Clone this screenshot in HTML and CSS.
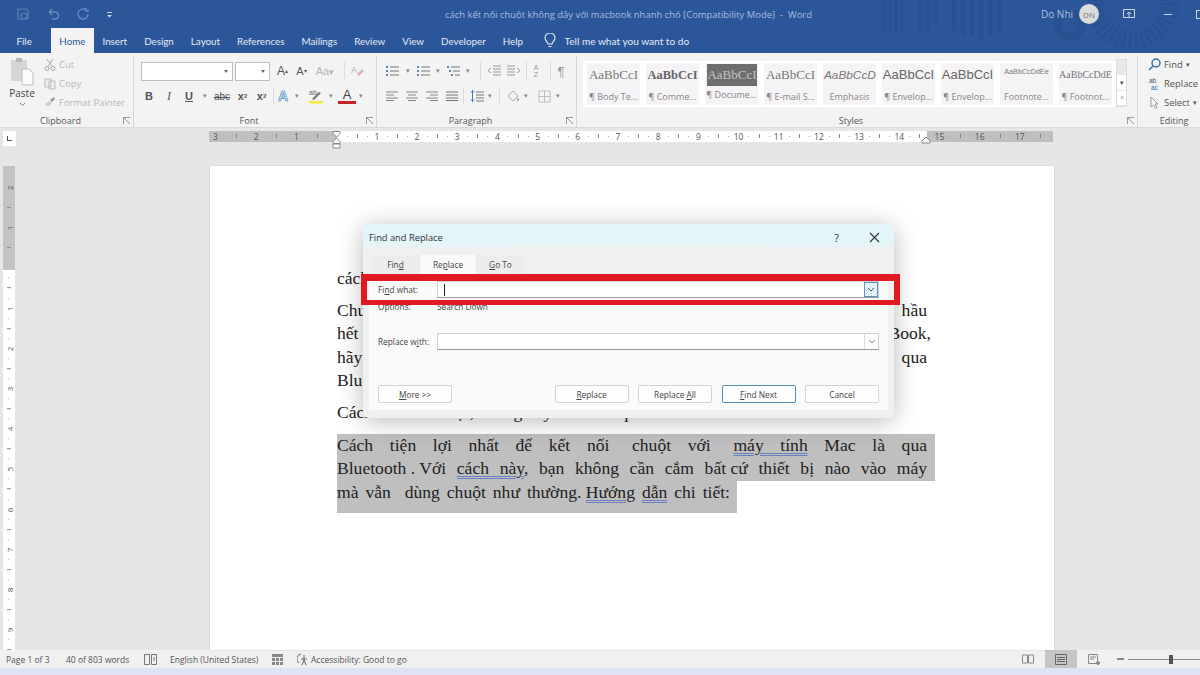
FILE: index.html
```html
<!DOCTYPE html>
<html lang="en">
<head>
<meta charset="UTF-8">
<title>cách kết nối chuột không dây với macbook nhanh chó - Word</title>
<link rel="stylesheet" href="styles.css">
</head>
<body>
<div class="app">

<header class="head">
    <svg class="head-art" width="330" height="53" viewBox="0 0 330 53" fill="none" stroke="#275290">
        <path d="M14 0v30M20 0v30M26 0v32M32 0v30" stroke-width="3"/>
        <path d="M50 0v34M58 0v34M66 0v24" stroke-width="3"/>
        <path d="M84 0v30M93 0v36M102 0v36M111 0v38M120 0v36M129 0v32" stroke-width="4"/>
        <circle cx="200" cy="25" r="12" stroke-width="7"/>
        <circle cx="262" cy="2" r="38" stroke-width="18" stroke-dasharray="3 3"/>
    </svg>
    <div class="titlebar">
        <div class="qat">
            <svg width="14" height="14" viewBox="0 0 14 14" fill="none" stroke="#5f80b4" stroke-width="1.2"><path d="M2 2h8l2 2v8H2z"/><circle cx="8" cy="9" r="3"/></svg>
            <svg width="14" height="14" viewBox="0 0 14 14" fill="none" stroke="#6d8bbb" stroke-width="1.4"><path d="M3 5h6a3 3 0 0 1 0 7H6M3 5l3-3M3 5l3 3"/></svg>
            <svg width="14" height="14" viewBox="0 0 14 14" fill="none" stroke="#6d8bbb" stroke-width="1.4"><path d="M10 3a5 5 0 1 0 2 4M10 1v3h3"/></svg>
            <svg width="8" height="14" viewBox="0 0 8 14" fill="#c9d6ea"><path d="M1 5h5v1H1zM1 8h5l-2.500 2.500z"/></svg>
        </div>
        <div class="doc-title">cách kết nối chuột không dây với macbook nhanh chó [Compatibility Mode]&nbsp; -&nbsp; Word</div>
        <div class="user">Do Nhi</div>
        <div class="avatar">DN</div>
        <svg class="win-icon" width="12" height="10" viewBox="0 0 12 10" fill="none" stroke="#c9d6ea"><path d="M.5.5h11v8H.5zM6 8V3M4 5l2-2 2 2"/></svg>
        <div class="win-min"></div>
        <div class="win-max"></div>
    </div>
    <nav class="tabs">
        <span class="tab tab-file">File</span>
        <span class="tab tab-on">Home</span>
        <span class="tab">Insert</span>
        <span class="tab">Design</span>
        <span class="tab">Layout</span>
        <span class="tab">References</span>
        <span class="tab">Mailings</span>
        <span class="tab">Review</span>
        <span class="tab">View</span>
        <span class="tab">Developer</span>
        <span class="tab">Help</span>
        <svg class="bulb" width="12" height="16" viewBox="0 0 12 16" fill="none" stroke="#e8eef7" stroke-width="1.100"><path d="M4 11c0-2-3-3-3-6a5 5 0 0 1 10 0c0 3-3 4-3 6zM4.500 13.500h3"/></svg>
        <span class="tell">Tell me what you want to do</span>
    </nav>
</header>

<section class="ribbon">
    <div class="grp grp-clip">
        <div class="grp-body clip-body">
            <div class="paste">
                <svg width="24" height="30" viewBox="0 0 24 30"><path d="M1 4h16v21H1z" fill="#d9d5d5"/><path d="M6 2h6v4H6z" fill="#bdb8b8"/><path d="M12 13h7l4 4v12H12z" fill="#fbfbfb" stroke="#bdbdbd"/></svg>
                <span>Paste</span>
                <svg width="7" height="5" viewBox="0 0 7 5" fill="none" stroke="#777"><path d="M1 1l2.500 2.500L6 1"/></svg>
            </div>
            <div class="clip-list">
                <div class="clip-item"><svg width="12" height="13" viewBox="0 0 12 13" fill="none" stroke="#aaa"><circle cx="3" cy="10.500" r="2"/><circle cx="9" cy="10.500" r="2"/><path d="M3.500 9L9 1M8.500 9L3 1"/></svg>Cut</div>
                <div class="clip-item"><svg width="12" height="13" viewBox="0 0 12 13" fill="none" stroke="#bbb"><path d="M1 2h6v8H1zM5 4h6v8H5z" fill="#eee"/></svg>Copy</div>
                <div class="clip-item"><svg width="12" height="13" viewBox="0 0 12 13"><path d="M6 4l4-3 1 2-3 3z" fill="#999"/><path d="M1 8l5-3 2 2-4 4z" fill="#ccc"/></svg>Format Painter</div>
            </div>
        </div>
        <div class="grp-label">Clipboard<i class="launch"></i></div>
    </div>

    <div class="grp grp-font">
        <div class="grp-body col">
            <div class="row row-top font-top">
                <div class="combo combo-name"><b class="caret"></b></div>
                <div class="combo combo-size"><b class="caret"></b></div>
                <span class="fb w19 big">A<sup>▴</sup></span>
                <span class="fb w19 big sm">A<sup>▾</sup></span>
                <span class="fb w28 fade">Aa <small>▾</small></span>
                <i class="vsep"></i>
                <svg class="ml6" width="14" height="14" viewBox="0 0 14 14"><text x="0" y="9" font-size="9" font-family="Liberation Sans" fill="#aaa">A</text><path d="M6 10l5-5 2 2-5 5z" fill="#d8b6b6"/></svg>
            </div>
            <div class="row row-bot font-bot">
                <span class="fb w20 bold">B</span>
                <span class="fb w20 ital">I</span>
                <span class="fb w20 bold und">U</span>
                <span class="fb w12 arrow">▾</span>
                <span class="fb w22 strike">abc</span>
                <span class="fb w19 bold">x<sub>2</sub></span>
                <span class="fb w19 bold">x<sup>2</sup></span>
                <i class="vsep"></i>
                <span class="fb w18 outline">A</span>
                <span class="fb w10 arrow">▾</span>
                <svg class="ml6" width="16" height="16" viewBox="0 0 16 16"><text x="1" y="7" font-size="7" font-family="Liberation Sans" fill="#666">ab</text><path d="M4 11l7-7 2 1-7 7z" fill="#777"/><path d="M1 13h14v2.500H1z" fill="#f4ee3a"/></svg>
                <span class="fb w14 arrow">▾</span>
                <span class="fb w18 color-a">A</span>
                <span class="fb w10 arrow">▾</span>
            </div>
        </div>
        <div class="grp-label">Font<i class="launch"></i></div>
    </div>

    <div class="grp grp-para">
        <div class="grp-body col">
            <div class="row row-top para-top">
                <svg width="14" height="12" viewBox="0 0 14 12" stroke="#777"><path d="M5 2h9M5 6h9M5 10h9"/><path d="M1 2h2M1 6h2M1 10h2" stroke="#5a86bb" stroke-width="2"/></svg>
                <span class="fb w17 arrow">▾</span>
                <svg width="14" height="12" viewBox="0 0 14 12" stroke="#777"><path d="M5 2h9M5 6h9M5 10h9"/><path d="M1 2h2M1 6h2M1 10h2" stroke="#5a86bb" stroke-width="2"/></svg>
                <span class="fb w16 arrow">▾</span>
                <svg width="14" height="12" viewBox="0 0 14 12" stroke="#777"><path d="M5 2h9M7 6h7M9 10h5"/><path d="M1 2h2M3 6h2M5 10h2" stroke="#5a86bb" stroke-width="2"/></svg>
                <span class="fb w15 arrow">▾</span>
                <i class="vsep"></i>
                <svg class="ml6" width="14" height="12" viewBox="0 0 14 12" stroke="#999"><path d="M6 1h8M6 4h8M6 7h8M6 10h8M4 3L1 5.500 4 8" fill="none"/></svg>
                <svg class="ml6" width="14" height="12" viewBox="0 0 14 12" stroke="#999"><path d="M0 1h8M0 4h8M0 7h8M0 10h8M10 3l3 2.500L10 8" fill="none"/></svg>
                <i class="vsep"></i>
                <span class="fb w18 sort">A<br>Z</span>
                <i class="vsep"></i>
                <span class="fb w20 pilcrow">¶</span>
            </div>
            <div class="row row-bot para-bot">
                <svg width="12" height="10" viewBox="0 0 12 10" stroke="#888"><path d="M0 1h12M0 4h8M0 7h12M0 9.500h8"/></svg>
                <svg class="ml8" width="12" height="10" viewBox="0 0 12 10" stroke="#888"><path d="M0 1h12M2 4h8M0 7h12M2 9.500h8"/></svg>
                <svg class="ml8" width="12" height="10" viewBox="0 0 12 10" stroke="#888"><path d="M0 1h12M4 4h8M0 7h12M4 9.500h8"/></svg>
                <svg class="ml8" width="12" height="10" viewBox="0 0 12 10" stroke="#777"><path d="M0 1h12M0 4h12M0 7h12M0 9.500h12"/></svg>
                <i class="vsep"></i>
                <svg class="ml6" width="14" height="14" viewBox="0 0 14 14" stroke="#777" fill="none"><path d="M6 3h8M6 6h8M6 9h8M6 12h8"/><path d="M2.500 2v10M1 3.500l1.500-2 1.500 2M1 10.500l1.500 2 1.500-2" stroke="#3f7fbf"/></svg>
                <span class="fb w12 arrow">▾</span>
                <i class="vsep vsep-tight"></i>
                <svg class="ml6" width="14" height="14" viewBox="0 0 14 14" stroke="#aaa" fill="none"><path d="M2 7l5-5 5 5-5 5z"/><path d="M12 9c1 1.500 1 3 0 3s-1-1.500 0-3z" fill="#ccc"/></svg>
                <span class="fb w12 arrow fade">▾</span>
                <svg class="ml6" width="13" height="13" viewBox="0 0 14 14" stroke="#bbb" fill="none"><path d="M1 1h12v12H1zM7 1v12M1 7h12"/></svg>
                <span class="fb w14 arrow fade">▾</span>
            </div>
        </div>
        <div class="grp-label">Paragraph<i class="launch"></i></div>
    </div>

    <div class="grp grp-styles">
        <div class="grp-body gallery-wrap">
            <div class="gallery">
                <div class="style"><span class="pv">AaBbCcI</span><span class="nm">¶ Body Te...</span></div>
                <div class="style"><span class="pv pv-b">AaBbCcI</span><span class="nm">¶ Comme...</span></div>
                <div class="style"><span class="pv pv-sel">AaBbCcI</span><span class="nm">¶ Docume...</span></div>
                <div class="style"><span class="pv">AaBbCcI</span><span class="nm">¶ E-mail S...</span></div>
                <div class="style"><span class="pv pv-em">AaBbCcD</span><span class="nm">Emphasis</span></div>
                <div class="style"><span class="pv pv-sans">AaBbCcI</span><span class="nm">¶ Envelop...</span></div>
                <div class="style"><span class="pv pv-sans">AaBbCcI</span><span class="nm">¶ Envelop...</span></div>
                <div class="style"><span class="pv pv-tiny">AaBbCcDdEe</span><span class="nm">Footnote...</span></div>
                <div class="style"><span class="pv pv-small">AaBbCcDdE</span><span class="nm">¶ Footnot...</span></div>
            </div>
            <div class="scroller">
                <span class="sc sc-off"></span>
                <span class="sc">▾</span>
                <span class="sc">⩡</span>
            </div>
        </div>
        <div class="grp-label">Styles<i class="launch"></i></div>
    </div>

    <div class="grp grp-edit">
        <div class="grp-body edit-list">
            <div class="edit-item"><svg width="13" height="13" viewBox="0 0 13 13" fill="none" stroke="#2f6ea8" stroke-width="1.400"><circle cx="8" cy="5" r="4"/><path d="M5 8l-4 4"/></svg>Find <small>▾</small></div>
            <div class="edit-item"><svg width="13" height="13" viewBox="0 0 13 13"><text x="1" y="6" font-size="6.500" font-family="Liberation Sans" fill="#555">ab</text><text x="3" y="12.500" font-size="6.500" font-family="Liberation Sans" fill="#2f6ea8">ac</text></svg>Replace</div>
            <div class="edit-item"><svg width="13" height="13" viewBox="0 0 13 13" fill="#fff" stroke="#999"><path d="M3 1v10l2.500-2 2 3.500 1.500-1-2-3.500h3z"/></svg>Select <small>▾</small></div>
        </div>
        <div class="grp-label">Editing</div>
    </div>
</section>

<div class="ruler-bar">
    <div class="corner"><i></i></div>
    <div class="ruler">
        <div class="ruler-cells">
            <span class="cell-first">3</span><span>2</span><span>1</span><span></span><span>1</span><span>2</span><span>3</span><span>4</span><span>5</span><span>6</span><span>7</span><span>8</span><span>9</span><span>10</span><span>11</span><span>12</span><span>13</span><span>14</span><span>15</span><span>16</span><span>17</span><span class="cell-last"></span>
        </div>
        <svg class="marker marker-l" width="10" height="20" viewBox="0 0 10 20" fill="#fff" stroke="#888"><path d="M1 .5h7v2L4.500 6 1 2.500zM4.500 7L8 10.500v2H1v-2zM1 13h7v4H1z"/></svg>
        <svg class="marker marker-r" width="10" height="8" viewBox="0 0 10 8" fill="#fff" stroke="#888"><path d="M5 1l4 4v2H1V5z"/></svg>
    </div>
</div>

<main class="work">
    <div class="vruler">
        <span>2</span><span>1</span><span></span><span>1</span><span>2</span><span>3</span><span>4</span><span>5</span><span>6</span><span>7</span><span>8</span><span>9</span>
    </div>
    <div class="page">
        <p class="para first"><span class="line left">cách kết nối chuột không dây với macbook</span></p>
        <p class="para">
            <span class="line">Chuột không dây là thiết bị được nhiều người dùng yêu thích và hầu</span>
            <span class="line wide">hết các dòng chuột hiện nay đều có thể kết nối với máy MacBook,</span>
            <span class="line">hãy cùng tìm hiểu cách kết nối chuột không dây với máy tính qua</span>
            <span class="line left">Bluetooth hoặc USB</span>
        </p>
        <p class="para"><span class="line left">Cách kết nối chuột, không dây với Mac qua</span></p>
        <div class="sel">
            <span class="line sel-line">Cách tiện lợi nhất để kết nối <i class="gap"></i>chuột với <i class="gap"></i><u>máy tính</u> Mac là qua</span>
            <span class="line sel-line"><span class="tight">Bluetooth . Với</span> <u>cách này</u>, bạn không cần cắm <span class="tight">bất cứ</span> thiết bị nào vào máy</span>
            <span class="line sel-line sel-last">mà vẫn &nbsp;dùng chuột như <span class="tight">thường. <u>Hướng</u></span> <u>dẫn</u> chi tiết:</span>
        </div>
    </div>

    <div class="dialog">
        <div class="dlg-title">
            <span>Find and Replace</span>
            <span class="dlg-help">?</span>
            <svg width="11" height="11" viewBox="0 0 11 11" stroke="#333" stroke-width="1.100"><path d="M1 1l9 9M10 1l-9 9"/></svg>
        </div>
        <div class="dlg-tabs">
            <span class="dlg-tab">Fin<u>d</u></span>
            <span class="dlg-tab dlg-tab-on">Re<u>p</u>lace</span>
            <span class="dlg-tab"><u>G</u>o To</span>
        </div>
        <div class="dlg-panel">
            <div class="dlg-row dlg-find">
                <label>Fi<u>n</u>d what:</label>
                <div class="dlg-input"><i class="cursor"></i><span class="dd dd-on"><svg width="8" height="5" viewBox="0 0 8 5" fill="none" stroke="#456"><path d="M1 1l3 3 3-3"/></svg></span></div>
            </div>
            <div class="dlg-row dlg-opts"><label>Options:</label><span>Search Down</span></div>
            <div class="dlg-row dlg-with">
                <label>Replace w<u>i</u>th:</label>
                <div class="dlg-input"><span class="dd"><svg width="8" height="5" viewBox="0 0 8 5" fill="none" stroke="#888"><path d="M1 1l3 3 3-3"/></svg></span></div>
            </div>
            <div class="dlg-btns">
                <span class="btn btn-more"><span><u>M</u>ore &gt;&gt;</span></span>
                <span class="btn"><span><u>R</u>eplace</span></span>
                <span class="btn"><span>Replace <u>A</u>ll</span></span>
                <span class="btn btn-main"><span><u>F</u>ind Next</span></span>
                <span class="btn"><span>Cancel</span></span>
            </div>
        </div>
    </div>
    <div class="redbox"></div>
</main>

<footer class="status">
    <span class="st st-page">Page 1 of 3</span>
    <span class="st st-words">40 of 803 words</span>
    <svg class="st-ic" width="13" height="11" viewBox="0 0 13 11" fill="none" stroke="#777"><path d="M.5.5h5v10h-5zM7.500.5h5v10h-5zM9 4h2M9 6h2"/></svg>
    <span class="st st-lang">English (United States)</span>
    <svg class="st-ic2" width="11" height="11" viewBox="0 0 11 11" fill="#888"><path d="M0 0h11v3H0zM0 4h3v3H0zM4 4h3v3H4zM8 4h3v3H8zM0 8h3v3H0zM4 8h3v3H4zM8 8h3v3H8z"/></svg>
    <svg class="st-ic3" width="14" height="13" viewBox="0 0 14 13" fill="none" stroke="#666"><path d="M4 1a5 5 0 0 0-2 9M7 2v5M4 6h6M5 12l2-5 2 5"/></svg>
    <span class="st">Accessibility: Good to go</span>
    <div class="st-right">
        <svg width="12" height="10" viewBox="0 0 12 10" fill="none" stroke="#888"><path d="M.5 1h5v8h-5zM6.500 1h5v8h-5z"/></svg>
        <div class="view-on"><svg width="12" height="11" viewBox="0 0 12 11" fill="none" stroke="#666"><path d="M.5.5h11v10H.5zM2 3.500h8M2 5.500h8M2 7.500h8"/></svg></div>
        <svg width="12" height="11" viewBox="0 0 12 11" fill="none" stroke="#888"><path d="M.5.5h9v9h-9zM2 3h6M2 5h4"/><circle cx="10" cy="9" r="1.500" fill="#888"/></svg>
        <i class="zoom-minus"></i>
        <div class="zoom-track"><i class="zoom-thumb"></i></div>
    </div>
</footer>
<div class="bottom-strip"></div>

</div>
</body>
</html>
```

FILE: styles.css
```css
* {
    box-sizing: border-box;
}

html, body {
    margin: 0;
    padding: 0;
}

body {
    width: 1200px;
    height: 675px;
    overflow: hidden;
    font-family: "Open Sans", "Liberation Sans", sans-serif;
    color: #444;
}

.app {
    position: relative;
    display: flex;
    flex-direction: column;
    width: 1200px;
    height: 675px;
    overflow: hidden;
    background-color: #e6e6e6;
}

/* title bar and tabs */
.head {
    position: relative;
    flex: none;
    height: 53px;
    background-color: #2b579a;
    overflow: hidden;
}

.head-art {
    position: absolute;
    left: 870px;
    top: 0;
}

.titlebar {
    position: relative;
    display: flex;
    align-items: center;
    height: 28px;
    font-size: 10.5px;
}

.titlebar > * {
    flex: none;
}

.qat {
    display: flex;
    align-items: center;
    gap: 16px;
    width: 445px;
    padding-left: 16px;
}

.doc-title {
    width: 596px;
    color: #a8bcdc;
    font-size: 9.45px;
}

.user {
    width: 38px;
    color: #aebfdb;
    font-size: 10px;
}

.avatar {
    display: flex;
    justify-content: center;
    align-items: center;
    width: 20px;
    height: 20px;
    border-radius: 50%;
    background-color: #dcdcdc;
    color: #777;
    font-size: 8px;
}

.win-icon {
    margin-left: 24px;
}

.win-min {
    width: 8px;
    height: 1px;
    margin-left: 29px;
    background-color: #c9d6ea;
}

.win-max {
    width: 9px;
    height: 9px;
    margin-left: 24px;
    border: 1px solid #c9d6ea;
}

.tabs {
    position: relative;
    display: flex;
    align-items: stretch;
    height: 25px;
    padding-left: 8px;
    font-family: Lato, "Liberation Sans", sans-serif;
    font-size: 9.8px;
    color: #e3eaf5;
}

.tab {
    display: flex;
    align-items: center;
    padding: 0 8.5px;
}

.tab-file {
    padding-right: 19px;
}

.tab-on {
    background-color: #f3f3f3;
    color: #2b579a;
}

.bulb {
    align-self: center;
    margin-left: 12px;
}

.tell {
    align-self: center;
    margin-left: 9px;
    font-size: 10.1px;
}

/* ribbon */
.ribbon {
    display: flex;
    flex: none;
    height: 75px;
    background-color: #f3f3f3;
    border-bottom: 1px solid #dadada;
}

.grp {
    display: flex;
    flex-direction: column;
    border-right: 1px solid #d6d6d6;
    margin-top: 3px;
}

.grp-body {
    flex: 1;
}

.grp-label {
    position: relative;
    height: 13px;
    padding-right: 12px;
    text-align: center;
    font-size: 9px;
    line-height: 13px;
    color: #555;
}

.launch {
    position: absolute;
    right: 3px;
    top: 3px;
    width: 7px;
    height: 7px;
    border-left: 1px solid #999;
    border-top: 1px solid #999;
    background: linear-gradient(45deg, transparent 45%, #999 45%, #999 55%, transparent 55%);
}

.grp-clip {
    width: 134px;
}

.grp-font {
    width: 243px;
}

.grp-para {
    width: 200px;
}

.grp-styles {
    width: 561px;
}

.grp-edit {
    width: 62px;
    border-right: 0;
}

.grp-edit .grp-label {
    padding: 0 0 0 10px;
}

.clip-body {
    display: flex;
}

.paste {
    display: flex;
    flex-direction: column;
    align-items: center;
    width: 44px;
    padding-top: 0;
    font-size: 10px;
    line-height: 12px;
    color: #444;
}

.paste span {
    margin: 1px 0 3px;
}

.clip-list {
    display: flex;
    flex-direction: column;
    gap: 4px;
    padding-top: 1px;
    font-size: 9.5px;
    color: #b8b8b8;
}

.clip-item {
    display: flex;
    align-items: center;
    gap: 3px;
    height: 15px;
}

.col {
    display: flex;
    flex-direction: column;
}

.row {
    display: flex;
    align-items: center;
}

.row-top {
    height: 22px;
    margin-top: 4px;
}

.row-bot {
    height: 20px;
    margin-top: 4px;
}

.font-top {
    padding-left: 7px;
}

.font-bot {
    padding-left: 5px;
}

.para-top {
    padding-left: 8px;
}

.para-bot {
    padding-left: 9px;
}

.combo {
    position: relative;
    height: 19px;
    margin-right: 2px;
    background-color: #fff;
    border: 1px solid #bdbdbd;
}

.combo-name {
    width: 92px;
}

.combo-size {
    width: 35px;
    margin-right: 3px;
}

.caret {
    position: absolute;
    right: 4px;
    top: 7px;
    border-left: 2.5px solid transparent;
    border-right: 2.5px solid transparent;
    border-top: 3px solid #666;
}

.fb {
    display: flex;
    justify-content: center;
    align-items: center;
    font-family: "Liberation Sans", sans-serif;
    font-size: 11px;
    color: #555;
}

.fb sup, .fb sub {
    font-size: 6px;
    line-height: 0;
}

.w10 { width: 10px; }
.w12 { width: 12px; }
.w14 { width: 14px; }
.w15 { width: 15px; }
.w16 { width: 16px; }
.w17 { width: 17px; }
.w18 { width: 18px; }
.w19 { width: 19px; }
.w20 { width: 20px; }
.w22 { width: 22px; }
.w28 { width: 28px; }

.ml6 { margin-left: 6px; }
.ml8 { margin-left: 8px; }

.big {
    font-size: 12px;
}

.sm {
    font-size: 11px;
}

.fade {
    color: #b5b5b5;
}

.bold {
    font-weight: bold;
}

.ital {
    font-style: italic;
    font-family: "Liberation Serif", serif;
    font-size: 12px;
}

.und {
    text-decoration: underline;
}

.arrow {
    font-size: 7px;
    color: #888;
}

.strike {
    font-size: 10px;
    text-decoration: line-through;
}

.outline {
    font-size: 14px;
    font-weight: bold;
    color: #d6e6f6;
    -webkit-text-stroke: 0.7px #4e8cc8;
}

.color-a {
    font-size: 13px;
    line-height: 13px;
    color: #444;
    border-bottom: 3px solid #c8222a;
}

.sort {
    font-size: 7px;
    line-height: 7px;
    color: #999;
    text-align: center;
}

.pilcrow {
    font-size: 13px;
    color: #999;
}

.vsep {
    width: 1px;
    height: 18px;
    margin-left: 5px;
    background-color: #dcdcdc;
}

.font-bot .vsep {
    margin-left: 2px;
}

.vsep-tight {
    margin-left: 3px;
}

/* style gallery */
.gallery-wrap {
    display: flex;
    padding: 5px 0 0 6px;
}

.gallery {
    display: flex;
    gap: 6px;
    width: 533px;
    height: 46px;
    padding: 2px 0 2px 4px;
    background-color: #fff;
}

.style {
    display: flex;
    flex-direction: column;
    width: 53px;
    background-color: #f6f3f6;
    overflow: hidden;
    white-space: nowrap;
}

.pv {
    height: 24px;
    margin-bottom: 2px;
    font-family: "Liberation Serif", serif;
    font-size: 13px;
    line-height: 24px;
    color: #777;
    text-align: center;
}

.pv-b {
    font-weight: bold;
    color: #666;
    font-size: 12.5px;
}

.pv-sel {
    margin: 1px 1px 1px 2px;
    height: 22px;
    line-height: 22px;
    background-color: #6e6e6e;
    color: #c4c4c4;
}

.pv-em {
    font-style: italic;
    font-family: "Liberation Sans", sans-serif;
    font-size: 11.8px;
    text-align: left;
    padding-left: 1px;
}

.pv-sans {
    font-family: "Liberation Sans", sans-serif;
    font-size: 13px;
    color: #666;
}

.pv-tiny {
    font-family: "Liberation Sans", sans-serif;
    font-size: 7.2px;
    line-height: 18px;
}

.pv-small {
    font-size: 10px;
}

.nm {
    font-size: 9px;
    line-height: 16px;
    color: #888;
    text-align: center;
}

.scroller {
    display: flex;
    flex-direction: column;
    width: 11px;
    height: 48px;
    margin-top: -2px;
    background-color: #fff;
    border: 1px solid #dcdcdc;
}

.sc {
    display: flex;
    flex: 1;
    justify-content: center;
    align-items: center;
    font-size: 7px;
    color: #555;
    border-bottom: 1px solid #e6e6e6;
}

.sc-off {
    background-color: #e8e8e8;
}

/* editing */
.edit-list {
    display: flex;
    flex-direction: column;
    gap: 3px;
    padding: 0 0 0 10px;
    font-size: 9.4px;
    color: #555;
}

.edit-item {
    display: flex;
    align-items: center;
    gap: 3px;
    height: 16px;
    white-space: nowrap;
}

.edit-item small {
    font-size: 7px;
}

/* rulers */
.ruler-bar {
    display: flex;
    flex: none;
    height: 38px;
    padding: 3px 0 0 3px;
}

.corner {
    display: flex;
    justify-content: center;
    align-items: center;
    width: 13px;
    height: 15px;
    background-color: #fff;
}

.corner i {
    width: 5px;
    height: 5px;
    border-left: 1px solid #555;
    border-bottom: 1px solid #555;
}

.ruler {
    position: relative;
    width: 844px;
    height: 11px;
    margin-left: 193px;
    background: linear-gradient(90deg, #bfbfbf 128px, #fff 128px, #fff 718px, #bfbfbf 718px);
}

.ruler-cells {
    display: flex;
}

.ruler-cells span {
    flex: 0 0 40.2px;
    height: 11px;
    font-size: 8.5px;
    line-height: 11px;
    text-align: center;
    color: #555;
    background-image:
        linear-gradient(#888, #888),
        linear-gradient(#aaa, #aaa),
        linear-gradient(#aaa, #aaa);
    background-repeat: no-repeat;
    background-size: 1px 4px, 1px 1px, 1px 1px;
    background-position: 0 3px, 10px 5px, 30px 5px;
}

.ruler-cells .cell-first {
    flex-basis: 27.2px;
    padding-left: 4px;
    text-align: left;
    background-position: 0 -8px, 17px 5px, -8px 5px;
}

.ruler-cells .cell-last {
    flex-basis: 13.2px;
}

.marker {
    position: absolute;
}

.marker-l {
    left: 123px;
    top: 0;
}

.marker-r {
    left: 712px;
    top: 5px;
}

/* workspace */
.work {
    position: relative;
    flex: 1;
    display: flex;
    min-height: 0;
    padding: 0 0 0 3px;
}

.vruler {
    display: flex;
    flex-direction: column;
    width: 12px;
    height: 484px;
    padding-top: 2px;
    background: linear-gradient(#c3c3c3 104px, #fff 104px);
    overflow: hidden;
}

.vruler span {
    display: flex;
    flex: 0 0 40.2px;
    justify-content: center;
    align-items: center;
    writing-mode: vertical-rl;
    transform: rotate(180deg);
    font-size: 8px;
    color: #555;
    background-image:
        linear-gradient(#888, #888),
        linear-gradient(#aaa, #aaa),
        linear-gradient(#aaa, #aaa);
    background-repeat: no-repeat;
    background-size: 4px 1px, 1px 1px, 1px 1px;
    background-position: 4px 0, 6px 10px, 6px 30px;
}

.page {
    flex: none;
    width: 844px;
    height: 484px;
    margin-left: 195px;
    padding: 101px 127px 0 127px;
    background-color: #fff;
    box-shadow: 0 0 1px #aaa;
    font-family: "Liberation Serif", serif;
    font-size: 17.6px;
    line-height: 23.6px;
    color: #222;
}

.para {
    margin: 0 0 8px;
}

.line {
    display: block;
    text-align: justify;
    text-align-last: justify;
    white-space: nowrap;
}

.wide {
    margin-right: -4px;
}

.line.left {
    text-align-last: left;
}

.tight {
    display: inline-block;
}

.gap {
    display: inline-block;
    width: 6px;
}

.sel {
    width: 598px;
    margin-top: 9px;
}

.sel-line {
    width: 598px;
    padding-right: 8px;
    background-color: #bfbfbf;
}

.sel-last {
    width: 400px;
    height: 32px;
    padding-right: 7px;
}

.sel u {
    text-decoration: underline double #6a80bd 1px;
    text-underline-offset: 2px;
}

/* dialog */
.dialog {
    position: absolute;
    left: 363px;
    top: 58px;
    display: flex;
    flex-direction: column;
    width: 531px;
    height: 194px;
    padding-bottom: 8px;
    border-radius: 6px;
    background-color: #f0f0f0;
    box-shadow: 0 3px 24px rgba(0, 0, 0, 0.28);
    font-size: 8.3px;
    color: #444;
    overflow: hidden;
}

.dlg-title {
    display: flex;
    flex: none;
    align-items: center;
    height: 26px;
    padding: 0 14px 0 6px;
    background: linear-gradient(#e2f5f8 70%, #f0f0f0);
    font-size: 9.3px;
    color: #333;
}

.dlg-help {
    margin-left: auto;
    margin-right: 30px;
    font-size: 11px;
}

.dlg-tabs {
    display: flex;
    flex: none;
    gap: 1px;
    height: 24px;
    margin-top: 5px;
    padding-left: 8px;
}

.dlg-tab {
    display: flex;
    justify-content: center;
    align-items: center;
    width: 49px;
    padding-bottom: 5px;
    background-color: #ececec;
}

.dlg-tab-on {
    width: 54px;
    background-color: #fafafa;
}

.dlg-panel {
    flex: 1;
    display: flex;
    flex-direction: column;
    margin: 0 6px;
    padding: 0 9px;
    background-color: #fafafa;
}

.dlg-row {
    display: flex;
    align-items: center;
}

.dlg-row label {
    width: 59px;
}

.dlg-find {
    height: 17px;
    margin-top: 2px;
}

.dlg-opts {
    height: 12px;
    margin-top: 2px;
}

.dlg-with {
    height: 17px;
    margin-top: 21px;
}

.dlg-input {
    display: flex;
    align-items: center;
    flex: 1;
    height: 17px;
    background-color: #fff;
    border: 1px solid #d0d0d0;
    border-bottom-color: #999;
}

.cursor {
    width: 1px;
    height: 12px;
    margin-left: 6px;
    background-color: #222;
}

.dd {
    display: flex;
    justify-content: center;
    align-items: center;
    width: 14px;
    height: 15px;
    margin-left: auto;
    border-left: 1px solid #ddd;
}

.dd-on {
    border: 1px solid #5b95c8;
    background-color: #e4f0fa;
}

.dlg-btns {
    display: flex;
    gap: 9.5px;
    margin-top: 35px;
}

.btn {
    display: flex;
    justify-content: center;
    align-items: center;
    width: 74px;
    height: 18px;
    background-color: #fdfdfd;
    border: 1px solid #d4d4d4;
    border-radius: 2px;
}

.btn-more {
    margin-right: auto;
}

.btn-main {
    border-color: #4f8fc0;
}

.redbox {
    position: absolute;
    left: 361px;
    top: 108px;
    width: 539px;
    height: 31px;
    border: solid #e01a22;
    border-width: 7px 6px 5px;
}

/* status bar */
.status {
    display: flex;
    flex: none;
    align-items: center;
    height: 18px;
    padding-left: 6px;
    background-color: #f0f0f0;
    font-size: 8.5px;
    color: #555;
}

.st {
    white-space: nowrap;
}

.st-page {
    width: 60px;
}

.st-words {
    width: 78px;
}

.st-ic {
    margin-right: 13px;
}

.st-lang {
    width: 102px;
}

.st-ic3 {
    margin: 0 0 0 14px;
}

.st-right {
    display: flex;
    align-items: center;
    margin-left: auto;
    height: 18px;
}

.view-on {
    display: flex;
    justify-content: center;
    align-items: center;
    width: 32px;
    height: 18px;
    margin: 0 11px;
    background-color: #c6c6c6;
}

.zoom-minus {
    width: 7px;
    height: 1.5px;
    margin-left: 17px;
    background-color: #888;
}

.zoom-track {
    position: relative;
    width: 72px;
    height: 1px;
    margin-left: 4px;
    background-color: #888;
}

.zoom-thumb {
    position: absolute;
    left: 41px;
    top: -4px;
    width: 4px;
    height: 9px;
    background-color: #555;
}

.bottom-strip {
    flex: none;
    height: 7px;
    background-color: #dfe3f3;
}
```
